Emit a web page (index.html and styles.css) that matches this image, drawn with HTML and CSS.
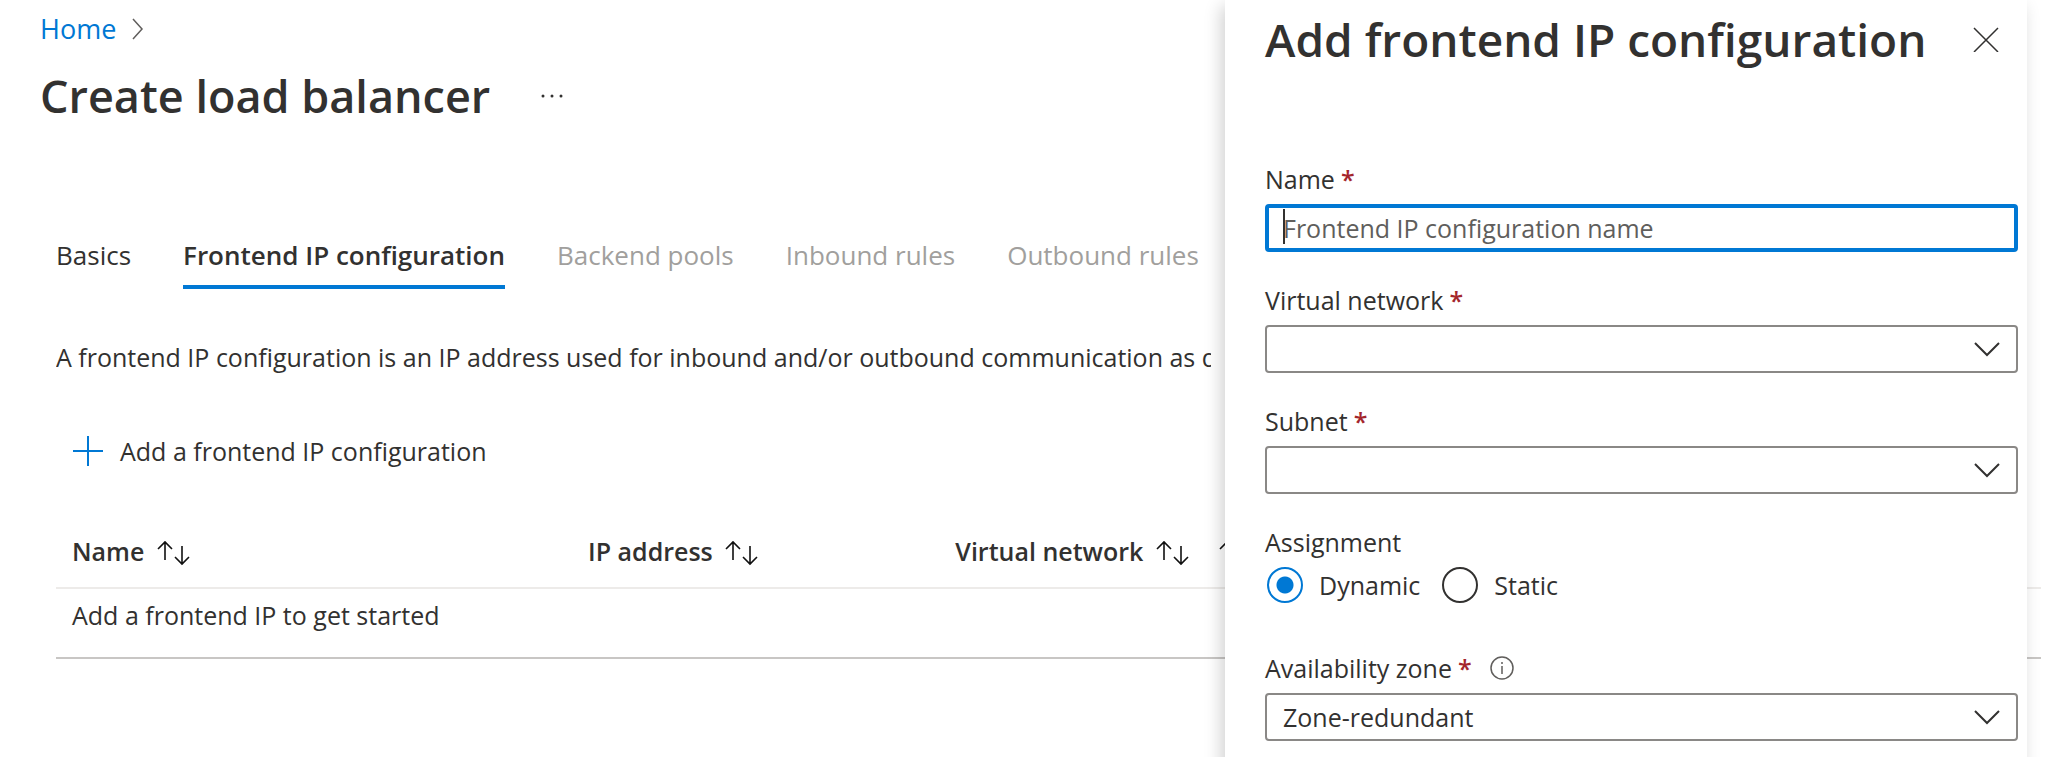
FILE: index.html
```html
<!DOCTYPE html>
<html lang="en">
<head>
  <meta charset="UTF-8">
  <meta name="viewport" content="width=device-width, initial-scale=1">
  <title>Create load balancer</title>
  <link rel="stylesheet" href="styles.css">
</head>
<body>
  <!-- shared icons -->
  <svg class="sprite" aria-hidden="true">
    <symbol id="sort" viewBox="0 0 34 26">
      <path d="M8 20V2M1 9l7-7 7 7M25 6v18M18 17l7 7 7-7" fill="none" stroke="#111" stroke-width="1.6"/>
    </symbol>
    <symbol id="chevron" viewBox="0 0 26 16">
      <path d="M1 1l12 12L25 1" fill="none" stroke="#323130" stroke-width="2"/>
    </symbol>
  </svg>

  <main class="page">
    <nav class="breadcrumb">
      <a href="#">Home</a>
      <svg width="12" height="22" viewBox="0 0 12 22"><path d="M1 1l9 10-9 10" fill="none" stroke="#605e5c" stroke-width="1.5"/></svg>
    </nav>

    <header class="title-bar">
      <h1>Create load balancer</h1>
      <button class="more" aria-label="More">
        <svg width="24" height="4" viewBox="0 0 24 4" fill="#323130"><circle cx="3" cy="2" r="1.5"/><circle cx="12" cy="2" r="1.5"/><circle cx="21" cy="2" r="1.5"/></svg>
      </button>
    </header>

    <div class="content">
      <div class="tabs" role="tablist">
        <button class="tab" role="tab">Basics</button>
        <button class="tab active" role="tab" aria-selected="true">Frontend IP configuration</button>
        <button class="tab" role="tab" disabled>Backend pools</button>
        <button class="tab" role="tab" disabled>Inbound rules</button>
        <button class="tab" role="tab" disabled>Outbound rules</button>
      </div>

      <p class="description">A frontend IP configuration is an IP address used for inbound and/or outbound communication as defined within load balancing rules.</p>

      <button class="add">
        <svg width="30" height="30" viewBox="0 0 30 30"><path d="M15 0v30M0 15h30" stroke="#0078d4" stroke-width="2"/></svg>
        Add a frontend IP configuration
      </button>

      <table class="grid">
        <thead>
          <tr>
            <th class="col-name">Name <svg class="sort"><use href="#sort"/></svg></th>
            <th class="col-ip">IP address <svg class="sort"><use href="#sort"/></svg></th>
            <th class="col-vnet">Virtual network <svg class="sort"><use href="#sort"/></svg></th>
            <th class="col-more"><svg class="sort"><use href="#sort"/></svg></th>
          </tr>
        </thead>
        <tbody>
          <tr><td colspan="4">Add a frontend IP to get started</td></tr>
        </tbody>
      </table>
    </div>
  </main>

  <!-- side panel, opens over the page -->
  <aside class="panel">
    <header class="panel-header">
      <h2>Add frontend IP configuration</h2>
      <button class="close" aria-label="Close">
        <svg width="26" height="26" viewBox="0 0 26 26"><path d="M1 2l24 24M25 2L1 26" stroke="#323130" stroke-width="1.5"/></svg>
      </button>
    </header>

    <form>
      <div class="field">
        <label for="name">Name <span class="required">*</span></label>
        <div class="control focused">
          <input type="text" id="name" placeholder="Frontend IP configuration name">
          <span class="caret"></span>
        </div>
      </div>

      <div class="field">
        <label for="vnet">Virtual network <span class="required">*</span></label>
        <div class="control">
          <select id="vnet"><option></option></select>
          <svg class="chevron"><use href="#chevron"/></svg>
        </div>
      </div>

      <div class="field">
        <label for="subnet">Subnet <span class="required">*</span></label>
        <div class="control">
          <select id="subnet"><option></option></select>
          <svg class="chevron"><use href="#chevron"/></svg>
        </div>
      </div>

      <div class="field assignment" role="radiogroup" aria-labelledby="assignment">
        <span class="label" id="assignment">Assignment</span>
        <div class="radios">
          <label class="radio"><input type="radio" name="assignment" checked> Dynamic</label>
          <label class="radio"><input type="radio" name="assignment"> Static</label>
        </div>
      </div>

      <div class="field">
        <label for="zone">Availability zone <span class="required">*</span>
          <svg class="info" viewBox="0 0 24 24"><circle cx="12" cy="12" r="11" fill="none" stroke="#605e5c" stroke-width="1.5"/><path d="M12 10v8M12 6v2" stroke="#605e5c" stroke-width="1.5"/></svg>
        </label>
        <div class="control">
          <select id="zone"><option>Zone-redundant</option></select>
          <svg class="chevron"><use href="#chevron"/></svg>
        </div>
      </div>
    </form>
  </aside>
</body>
</html>
```

FILE: styles.css
```css
* {
  box-sizing: border-box;
}

:root {
  --panel: min(802px, 100%);
  --gutter: 21px;
}

body {
  margin: 0;
  position: relative;
  min-height: 100vh;
  overflow: hidden;
  background: #fff;
  color: #323130;
  font: 25px/36px "Open Sans", "Noto Sans", sans-serif;
}

h1, h2, p {
  margin: 0;
}

h1, h2 {
  font-size: 46px;
  line-height: 64px;
  font-weight: 600;
  white-space: nowrap;
}

h1 {
  font-size: 45px;
}

button {
  padding: 0;
  border: none;
  background: none;
  color: inherit;
  font: inherit;
  cursor: pointer;
}

svg {
  flex-shrink: 0;
}

.sprite {
  position: absolute;
  width: 0;
  height: 0;
}

/* page */
.page {
  padding: 11px 7px 0 40px;
}

.breadcrumb {
  display: flex;
  align-items: center;
  gap: 16px;
  margin-bottom: 17px;
  font-size: 27px;
}

.breadcrumb a {
  color: #0078d4;
  text-decoration: none;
}

.title-bar {
  display: flex;
  align-items: center;
  gap: 50px;
  margin-bottom: 109px;
}

.more,
.close {
  display: flex;
}

.content {
  padding-left: 16px;
}

.tabs {
  display: flex;
  gap: 52px;
  margin-bottom: 50px;
  font-size: 26px;
  white-space: nowrap;
}

.tab {
  padding-bottom: 12px;
  border-bottom: 4px solid transparent;
}

.tab.active {
  font-weight: 600;
  border-color: #0078d4;
}

.tab:disabled {
  color: #a19f9d;
}

.description {
  margin-right: 830px;
  margin-bottom: 58px;
  overflow: hidden;
  white-space: nowrap;
}

.add {
  display: flex;
  align-items: center;
  gap: 17px;
  margin-bottom: 50px;
  padding-left: 17px;
}

.grid {
  width: 100%;
  table-layout: fixed;
  border-collapse: separate;
  border-spacing: 0;
  text-align: left;
  white-space: nowrap;
}

.grid th {
  padding: 14px 0 18px 16px;
  border-bottom: 2px solid #edebe9;
  font-weight: 600;
}

.grid td {
  padding: 8px 0 24px 16px;
  border-bottom: 2px solid #c8c6c4;
}

.col-name {
  width: 26%;
}

.col-ip {
  width: 18.5%;
}

.col-vnet {
  width: 13.3%;
}

.sort {
  width: 34px;
  height: 26px;
  margin-left: 6px;
  vertical-align: -5px;
}

.col-more .sort {
  margin-left: 0;
}

/* side panel */
.panel {
  position: absolute;
  top: 0;
  right: var(--gutter);
  width: var(--panel);
  min-height: 100%;
  padding: 7px 9px 0 40px;
  background: #fff;
  box-shadow: -4px 6px 16px rgba(0, 0, 0, 0.18);
}

.panel-header {
  display: flex;
  align-items: center;
  justify-content: space-between;
  padding-right: 19px;
  margin-bottom: 90px;
}

.field {
  margin-bottom: 30px;
}

.field > label,
.label {
  display: flex;
  align-items: center;
  gap: 6px;
  margin-bottom: 7px;
}

.required {
  color: #a4262c;
  font-weight: 600;
}

.info {
  width: 24px;
  height: 24px;
  margin-left: 12px;
}

.control {
  position: relative;
}

.control input,
.control select {
  display: block;
  width: 100%;
  height: 48px;
  padding: 0 16px;
  border: 2px solid #8a8886;
  border-radius: 4px;
  background: #fff;
  color: inherit;
  font: inherit;
  appearance: none;
  outline: none;
}

.control.focused input {
  padding: 0 14px;
  border: 4px solid #0078d4;
}

.control input::placeholder {
  color: #605e5c;
}

.caret {
  position: absolute;
  top: 5px;
  left: 18px;
  width: 2px;
  height: 35px;
  background: #323130;
}

.chevron {
  position: absolute;
  top: 17px;
  right: 18px;
  width: 26px;
  height: 16px;
  pointer-events: none;
}

.assignment {
  margin-bottom: 47px;
}

.radios {
  display: flex;
  gap: 22px;
  padding-left: 2px;
}

.radio {
  display: flex;
  align-items: center;
  gap: 16px;
}

.radio input {
  appearance: none;
  width: 36px;
  height: 36px;
  margin: 0;
  border: 2px solid #323130;
  border-radius: 50%;
}

.radio input:checked {
  border-color: #0078d4;
  background: radial-gradient(circle, #0078d4 8px, #fff 9px);
}
```
